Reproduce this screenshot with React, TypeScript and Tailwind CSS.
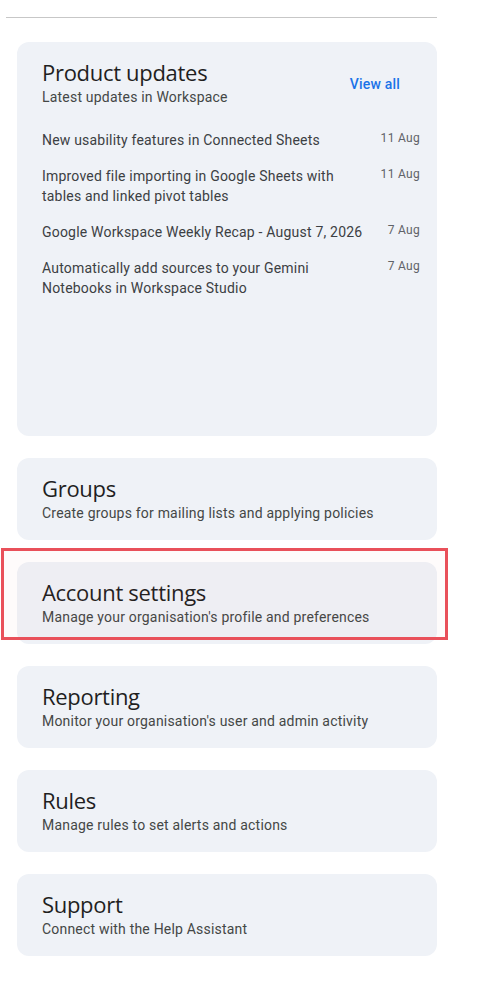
import React from "react";

const updates = [
  { title: "New usability features in Connected Sheets", date: "11 Aug" },
  {
    title: "Improved file importing in Google Sheets with tables and linked pivot tables",
    date: "11 Aug",
  },
  { title: "Google Workspace Weekly Recap - August 7, 2026", date: "7 Aug" },
  {
    title: "Automatically add sources to your Gemini Notebooks in Workspace Studio",
    date: "7 Aug",
  },
];

const sections = [
  { title: "Groups", desc: "Create groups for mailing lists and applying policies" },
  { title: "Account settings", desc: "Manage your organisation's profile and preferences", marked: true },
  { title: "Reporting", desc: "Monitor your organisation's user and admin activity" },
  { title: "Rules", desc: "Manage rules to set alerts and actions" },
  { title: "Support", desc: "Connect with the Help Assistant" },
];

const headFont = { fontFamily: '"Open Sans", "Noto Sans", sans-serif' };
const bodyFont = { fontFamily: 'Roboto, "Liberation Sans", sans-serif' };

function CardHeader({ title, desc }: { title: string; desc: string }) {
  return (
    <div>
      <div className="mb-[2px] text-[22px] leading-[26px] text-[#1f1f1f] tracking-[-0.3px]" style={headFont}>
        {title}
      </div>
      <div className="text-[14px] leading-[20px] tracking-[0.2px] text-[#444746]" style={bodyFont}>
        {desc}
      </div>
    </div>
  );
}

export default function App() {
  return (
    <div className="min-h-[982px] bg-white pl-[6px] pt-[17px]" style={bodyFont}>
      <div className="w-[431px]">
        <div className="h-px bg-[#c7c7c7]" />

        <div className="ml-[11px] mt-[24px] flex flex-col gap-[22px]">
          {/* Product updates */}
          <div className="h-[394px] rounded-[12px] bg-[#eff2f7] pl-[25px] pr-[17px] pt-[17px]">
            <div className="flex items-center justify-between pr-[20px]">
              <CardHeader title="Product updates" desc="Latest updates in Workspace" />
              <a className="mt-[3px] text-[14px] font-medium tracking-[0.2px] text-[#1a73e8]" style={bodyFont}>
                View all
              </a>
            </div>
            <div className="mt-[23px] flex flex-col gap-[16px]">
              {updates.map((u) => (
                <div key={u.title} className="flex items-start justify-between">
                  <div className="w-[328px] text-[14px] leading-[20px] tracking-[0.2px] text-[#3c4043]">
                    {u.title}
                  </div>
                  <div className="shrink-0 text-[12px] leading-[16px] tracking-[0.3px] text-[#5f6368]">
                    {u.date}
                  </div>
                </div>
              ))}
            </div>
          </div>

          {sections.map((s) => (
            <div key={s.title} className="relative">
              <div className="h-[82px] rounded-[12px] bg-[#eff2f7] pl-[25px] pt-[17px]">
                <CardHeader title={s.title} desc={s.desc} />
              </div>
              {s.marked && (
                <div className="pointer-events-none absolute -left-[16px] -right-[11px] -top-[14px] bottom-[4px] border-[3px] border-[#e9505a] bg-[rgba(233,80,90,0.025)]" />
              )}
            </div>
          ))}
        </div>
      </div>
    </div>
  );
}
